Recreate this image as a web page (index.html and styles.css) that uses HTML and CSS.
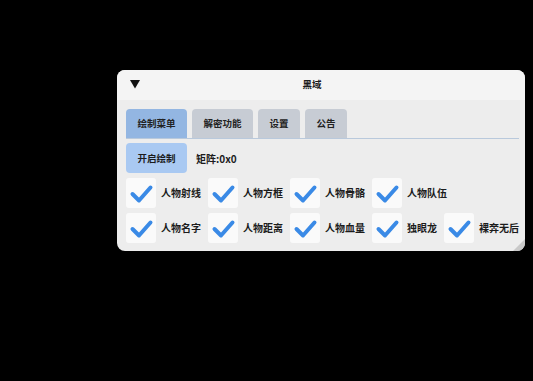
FILE: index.html
```html
<!DOCTYPE html>
<html lang="zh">
<head>
<meta charset="utf-8">
<link rel="stylesheet" href="styles.css">
</head>
<body>
<div class="window">
  <div class="titlebar">
    <svg class="arrow" width="10" height="9" viewBox="0 0 10 9"><polygon points="0,0 10,0 5,8.5" fill="#111"/></svg>
    <div class="title">黑域</div>
  </div>
  <div class="tabs">
    <div class="tab active">绘制菜单</div>
    <div class="tab">解密功能</div>
    <div class="tab">设置</div>
    <div class="tab">公告</div>
  </div>
  <div class="sep"></div>
  <div class="content">
    <div class="row">
      <div class="btn">开启绘制</div>
      <div class="info">矩阵:0x0</div>
    </div>
    <div class="row checks">
      <div class="item"><span class="box"><svg viewBox="0 0 30 30" width="30" height="30"><polyline points="6.5,16 13,22.5 24.5,9.5" fill="none" stroke="#3a8ae6" stroke-width="4" stroke-linecap="round" stroke-linejoin="round"/></svg></span><span class="label">人物射线</span></div>
      <div class="item"><span class="box"><svg viewBox="0 0 30 30" width="30" height="30"><polyline points="6.5,16 13,22.5 24.5,9.5" fill="none" stroke="#3a8ae6" stroke-width="4" stroke-linecap="round" stroke-linejoin="round"/></svg></span><span class="label">人物方框</span></div>
      <div class="item"><span class="box"><svg viewBox="0 0 30 30" width="30" height="30"><polyline points="6.5,16 13,22.5 24.5,9.5" fill="none" stroke="#3a8ae6" stroke-width="4" stroke-linecap="round" stroke-linejoin="round"/></svg></span><span class="label">人物骨骼</span></div>
      <div class="item"><span class="box"><svg viewBox="0 0 30 30" width="30" height="30"><polyline points="6.5,16 13,22.5 24.5,9.5" fill="none" stroke="#3a8ae6" stroke-width="4" stroke-linecap="round" stroke-linejoin="round"/></svg></span><span class="label">人物队伍</span></div>
    </div>
    <div class="row checks">
      <div class="item"><span class="box"><svg viewBox="0 0 30 30" width="30" height="30"><polyline points="6.5,16 13,22.5 24.5,9.5" fill="none" stroke="#3a8ae6" stroke-width="4" stroke-linecap="round" stroke-linejoin="round"/></svg></span><span class="label">人物名字</span></div>
      <div class="item"><span class="box"><svg viewBox="0 0 30 30" width="30" height="30"><polyline points="6.5,16 13,22.5 24.5,9.5" fill="none" stroke="#3a8ae6" stroke-width="4" stroke-linecap="round" stroke-linejoin="round"/></svg></span><span class="label">人物距离</span></div>
      <div class="item"><span class="box"><svg viewBox="0 0 30 30" width="30" height="30"><polyline points="6.5,16 13,22.5 24.5,9.5" fill="none" stroke="#3a8ae6" stroke-width="4" stroke-linecap="round" stroke-linejoin="round"/></svg></span><span class="label">人物血量</span></div>
      <div class="item"><span class="box"><svg viewBox="0 0 30 30" width="30" height="30"><polyline points="6.5,16 13,22.5 24.5,9.5" fill="none" stroke="#3a8ae6" stroke-width="4" stroke-linecap="round" stroke-linejoin="round"/></svg></span><span class="label">独眼龙</span></div>
      <div class="item"><span class="box"><svg viewBox="0 0 30 30" width="30" height="30"><polyline points="6.5,16 13,22.5 24.5,9.5" fill="none" stroke="#3a8ae6" stroke-width="4" stroke-linecap="round" stroke-linejoin="round"/></svg></span><span class="label">裸奔无后</span></div>
    </div>
  </div>
  <div class="grip"></div>
</div>
</body>
</html>
```

FILE: styles.css
```css
html, body {
  margin: 0;
  padding: 0;
  background: #000;
  width: 533px;
  height: 381px;
  overflow: hidden;
}
body {
  font-family: "Noto Sans CJK SC", "Noto Sans", sans-serif;
  color: #1c1c1c;
  padding-top: 70px;
  box-sizing: border-box;
}
.window {
  position: relative;
  margin-left: 117px;
  width: 408px;
  height: 181px;
  border-radius: 8px;
  background: #ededed;
  overflow: hidden;
}
.titlebar {
  height: 30px;
  background: #f4f4f4;
  display: flex;
  align-items: center;
  padding: 0 13px;
}
.arrow {
  display: block;
  margin-top: -2px;
}
.title {
  flex: 1;
  text-align: center;
  font-size: 9.5px;
  font-weight: 700;
  padding-right: 28px;
  margin-top: -2px;
}
.tabs {
  display: flex;
  gap: 5px;
  padding: 9px 9px 0;
}
.tab {
  height: 29px;
  line-height: 29px;
  padding: 0 11.5px;
  font-size: 9.5px;
  font-weight: 700;
  background: #c7ccd4;
  border-radius: 4px 4px 0 0;
  color: #222;
}
.tab.active {
  background: #93b6e2;
}
.sep {
  height: 1px;
  margin: 0 6px 0 9px;
  background: #b9c9dc;
}
.content {
  padding: 4px 9px 0;
  display: flex;
  flex-direction: column;
  gap: 4px;
}
.row {
  display: flex;
  align-items: center;
  height: 30px;
}
.btn {
  width: 61px;
  height: 30px;
  line-height: 30px;
  text-align: center;
  background: #a9c9f2;
  border-radius: 4px;
  font-size: 9.5px;
  font-weight: 700;
}
.info {
  margin-left: 9px;
  font-size: 10px;
  font-weight: 700;
}
.checks {
  height: 31px;
}
.item {
  display: flex;
  align-items: center;
  margin-right: 7px;
  flex-shrink: 0;
  white-space: nowrap;
}
.item:last-child {
  margin-right: 0;
}
.box {
  width: 30px;
  height: 30px;
  flex-shrink: 0;
  background: #fafafa;
  border-radius: 3px;
  display: block;
}
.box svg {
  display: block;
}
.label {
  margin-left: 5px;
  font-size: 10px;
  font-weight: 700;
}
.grip {
  position: absolute;
  right: 0;
  bottom: 0;
  width: 0;
  height: 0;
  border-left: 12px solid transparent;
  border-bottom: 12px solid #c9c9c9;
}
```
